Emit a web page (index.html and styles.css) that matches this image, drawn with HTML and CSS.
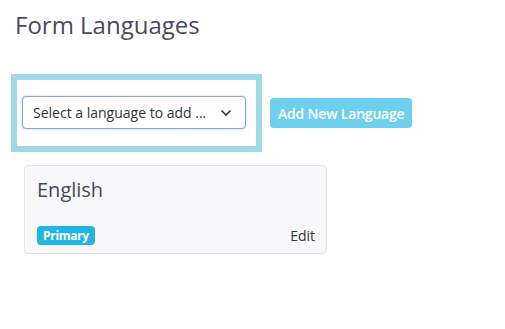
FILE: index.html
```html
<!DOCTYPE html>
<html lang="en">
<head>
  <meta charset="UTF-8">
  <title>Form Languages</title>
  <link rel="stylesheet" href="styles.css">
</head>
<body>
  <div class="page">
    <h1 class="page-title">Form Languages</h1>

    <div class="toolbar">
      <div class="highlight">
        <div class="select">
          <span class="select-text">Select a language to add ...</span>
          <svg class="select-arrow" width="12" height="8" viewBox="0 0 12 8">
            <path d="M1.5 1.5 L6 6 L10.5 1.5" fill="none" stroke="#333" stroke-width="1.6"/>
          </svg>
        </div>
      </div>
      <button class="btn-add">Add New Language</button>
    </div>

    <!-- Language cards -->
    <div class="lang-card">
      <div class="lang-name">English</div>
      <div class="lang-footer">
        <span class="badge">Primary</span>
        <a class="lang-edit">Edit</a>
      </div>
    </div>
  </div>
</body>
</html>
```

FILE: styles.css
```css
/**
 * Base.
 */
* {
  box-sizing: border-box;
  font-family: 'Open Sans', sans-serif;
}
body {
  margin: 0;
  padding: 0;
  background: white;
}
.page {
  padding: 7px 15px;
}
.page-title {
  margin: 0;
  font-size: 24px;
  font-weight: 400;
  line-height: 36px;
  color: #4b4a5f;
}

/**
 * Toolbar.
 */
.toolbar {
  display: flex;
  align-items: center;
  gap: 8px;
  margin: 31px 0 0 -4px;
}
.highlight {
  width: 251px;
  padding: 16px 10px 17px 5px;
  border: 6px solid #9fd9e8;
}
.select {
  display: flex;
  align-items: center;
  justify-content: space-between;
  height: 33px;
  padding: 0 13px 0 10px;
  border: 1px solid #7fa3f2;
  border-radius: 4px;
  box-shadow: 0 0 2px #a9c4ff;
  background: white;
}
.select-text {
  font-size: 14px;
  color: #333;
}
.btn-add {
  height: 30px;
  padding: 0 8px;
  border: none;
  border-radius: 4px;
  background-color: #6fcfee;
  color: white;
  font-size: 14px;
  font-weight: 600;
  letter-spacing: -0.2px;
}

/**
 * Language card.
 */
.lang-card {
  width: 303px;
  height: 89px;
  margin: 13px 0 0 9px;
  padding: 10px 11px 8px 12px;
  display: flex;
  flex-direction: column;
  justify-content: space-between;
  border: 1px solid #e3e3e9;
  border-radius: 4px;
  background-color: #f8f8fb;
}
.lang-name {
  font-size: 20px;
  line-height: 28px;
  color: #48475c;
}
.lang-footer {
  display: flex;
  align-items: flex-end;
  justify-content: space-between;
}
.badge {
  padding: 1px 6px;
  border-radius: 4px;
  background-color: #22b5e4;
  color: white;
  font-size: 12px;
  font-weight: 700;
  line-height: 17px;
  letter-spacing: -0.3px;
}
.lang-edit {
  font-size: 14px;
  line-height: 18px;
  color: #333;
}
```
